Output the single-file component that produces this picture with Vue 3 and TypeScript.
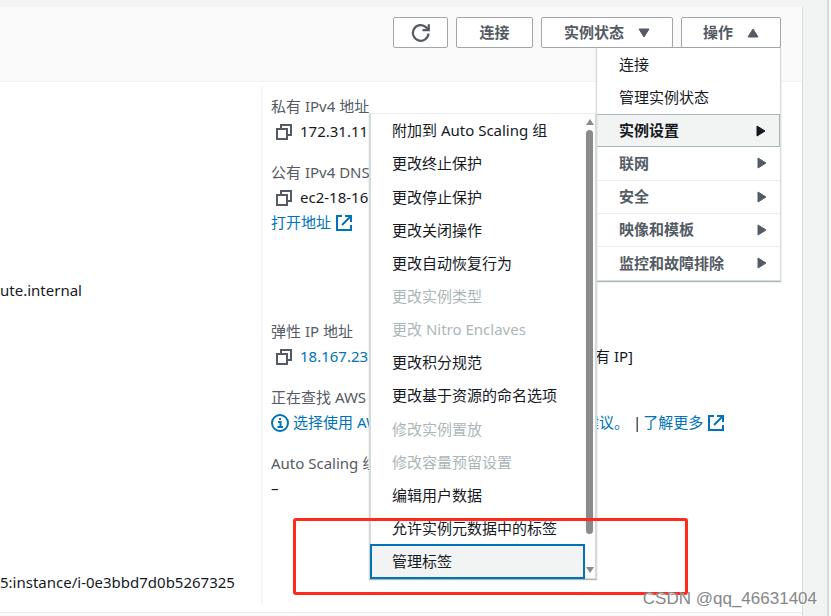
<script setup lang="ts">
interface MenuItem {
  label: string
  disabled?: boolean
  focused?: boolean
}

interface ActionItem {
  label: string
  group?: boolean
  open?: boolean
}

const actions: ActionItem[] = [
  { label: '连接' },
  { label: '管理实例状态' },
  { label: '实例设置', group: true, open: true },
  { label: '联网', group: true },
  { label: '安全', group: true },
  { label: '映像和模板', group: true },
  { label: '监控和故障排除', group: true },
]

const settings: MenuItem[] = [
  { label: '附加到 Auto Scaling 组' },
  { label: '更改终止保护' },
  { label: '更改停止保护' },
  { label: '更改关闭操作' },
  { label: '更改自动恢复行为' },
  { label: '更改实例类型', disabled: true },
  { label: '更改 Nitro Enclaves', disabled: true },
  { label: '更改积分规范' },
  { label: '更改基于资源的命名选项' },
  { label: '修改实例置放', disabled: true },
  { label: '修改容量预留设置', disabled: true },
  { label: '编辑用户数据' },
  { label: '允许实例元数据中的标签' },
  { label: '管理标签', focused: true },
]
</script>

<template>
  <div class="page">
    <main class="content">
      <section class="panel">
        <header class="toolbar">
          <button class="btn refresh" type="button" aria-label="刷新">
            <svg width="20" height="20" viewBox="0 0 20 20" fill="none" stroke="currentColor" stroke-width="2.2">
              <path d="M17.5 10.5A7.8 7.8 0 1 1 15.2 4.4L17.4 6.4" />
              <path d="M17.8 1.2V7.2H11.5" />
            </svg>
          </button>
          <button class="btn connect" type="button">连接</button>
          <button class="btn state" type="button">
            实例状态
            <svg width="12" height="10" viewBox="0 0 12 10"><path d="M1 1H11L6 9Z" fill="currentColor" stroke="currentColor" stroke-linejoin="round" /></svg>
          </button>
          <div class="dropdown">
            <button class="btn action" type="button" aria-expanded="true">
              操作
              <svg width="12" height="10" viewBox="0 0 12 10"><path d="M1 9H11L6 1Z" fill="currentColor" stroke="currentColor" stroke-linejoin="round" /></svg>
            </button>
            <div class="menu">
              <div v-for="item in actions" :key="item.label" class="entry">
                <button type="button" class="menu-item" :class="{ group: item.group, open: item.open }">
                  {{ item.label }}
                  <svg v-if="item.group" width="10" height="12" viewBox="0 0 10 12"><path d="M1 1V11L9 6Z" fill="currentColor" stroke="currentColor" stroke-linejoin="round" /></svg>
                </button>
                <div v-if="item.open" class="submenu">
                  <div class="options">
                    <button
                      v-for="option in settings"
                      :key="option.label"
                      type="button"
                      class="option"
                      :class="{ focused: option.focused }"
                      :disabled="option.disabled"
                    >{{ option.label }}</button>
                  </div>
                  <div class="scrollbar">
                    <svg width="8" height="6" viewBox="0 0 8 6"><path d="M0 6L4 0L8 6Z" fill="currentColor" /></svg>
                    <span class="thumb"></span>
                    <svg width="8" height="6" viewBox="0 0 8 6"><path d="M0 0H8L4 6Z" fill="currentColor" /></svg>
                  </div>
                </div>
              </div>
            </div>
          </div>
        </header>

        <div class="details">
          <div class="column first">
            <p class="line">ute.internal</p>
            <p class="line">5:instance/i-0e3bbd7d0b5267325</p>
          </div>
          <dl class="column second">
            <div class="field">
              <dt>私有 IPv4 地址</dt>
              <dd class="line copyable">
                <svg class="copy" width="16" height="16" viewBox="0 0 16 16"><path d="M1 5H11V15H1ZM5 5V1H15V11H11" /></svg>
                172.31.11
              </dd>
            </div>
            <div class="field tall">
              <dt>公有 IPv4 DNS</dt>
              <dd class="line copyable">
                <svg class="copy" width="16" height="16" viewBox="0 0 16 16"><path d="M1 5H11V15H1ZM5 5V1H15V11H11" /></svg>
                ec2-18-16
              </dd>
              <dd class="line">
                <a href="#" class="external">打开地址
                  <svg width="16" height="16" viewBox="0 0 16 16"><path d="M6 1H1V15H15V10M9 1H15V7M15 1L6 10" /></svg>
                </a>
              </dd>
            </div>
            <div class="field">
              <dt>弹性 IP 地址</dt>
              <dd class="line copyable">
                <svg class="copy" width="16" height="16" viewBox="0 0 16 16"><path d="M1 5H11V15H1ZM5 5V1H15V11H11" /></svg>
                <a href="#" class="address">18.167.23</a>
                <span>有 IP]</span>
              </dd>
            </div>
            <div class="field">
              <dt>正在查找 AWS</dt>
              <dd class="line">
                <a href="#" class="finder">
                  <svg width="18" height="18" viewBox="0 0 18 18"><circle cx="9" cy="9" r="8" /><path d="M9 4V6M7 8H9.5V13M6.5 13H12" /></svg>
                  选择使用 AW
                </a>
                <a href="#">建议。</a>
                <span class="bar">|</span>
                <a href="#" class="external">了解更多
                  <svg width="16" height="16" viewBox="0 0 16 16"><path d="M6 1H1V15H15V10M9 1H15V7M15 1L6 10" /></svg>
                </a>
              </dd>
            </div>
            <div class="field">
              <dt>Auto Scaling 组</dt>
              <dd class="line">–</dd>
            </div>
          </dl>
        </div>
        <div class="next"></div>
      </section>
    </main>
    <div class="highlight"></div>
    <div class="watermark">CSDN @qq_46631404</div>
  </div>
</template>

<style>
body {
  overflow: hidden;
  background: #fafafa;
}
</style>

<style scoped>
.page {
  position: relative;
  height: 100vh;
  overflow: hidden;
  box-sizing: border-box;
  padding-right: 2px;
  color: #16191f;
  font: 15px/25px "Noto Sans", "Noto Sans CJK SC", sans-serif;
}
.page * {
  box-sizing: border-box;
}
.content {
  height: 100%;
  padding: 7px 24px 0 0;
  background: #f2f3f3;
  border-right: 2px solid #d5dbdb;
}
.panel {
  display: flex;
  flex-direction: column;
  height: 100%;
  background: #fff;
  border-right: 1px solid #d5dbdb;
}
.toolbar {
  display: flex;
  justify-content: flex-end;
  gap: 8px;
  height: 75px;
  padding: 10px 21px 0 0;
  background: #fafafa;
  border-bottom: 1px solid #f2f3f3;
}
button {
  font: inherit;
  margin: 0;
}
.btn {
  display: flex;
  align-items: center;
  justify-content: center;
  gap: 14px;
  height: 31px;
  padding: 0;
  color: #545b64;
  font-weight: 700;
  background: #fff;
  border: 1px solid #a2a6ab;
  border-radius: 2px;
}
.refresh { width: 55px; }
.connect { width: 77px; }
.state { width: 132px; }
.action { width: 100px; }
.dropdown {
  position: relative;
}
.menu {
  position: absolute;
  top: 30px;
  right: 0;
  z-index: 2;
  display: grid;
  grid-auto-rows: 1fr;
  width: 185px;
  height: 234px;
  background: #fff;
  border: 1px solid #d5dbdb;
  border-top-color: #a2a6ab;
  box-shadow: 0 1px 1px #aab7b8;
}
.entry {
  position: relative;
}
.menu-item {
  display: flex;
  align-items: center;
  justify-content: space-between;
  width: 100%;
  height: 100%;
  padding: 0 13px 0 22px;
  color: #16191f;
  background: transparent;
  border: 0;
}
.menu-item.group {
  color: #545b64;
  font-weight: 700;
  border-bottom: 1px solid #eaeded;
}
.entry:last-child .menu-item {
  border-bottom: 0;
}
.menu-item.group.open {
  color: #16191f;
  background: #f2f3f3;
  border: 1px solid #aab7b8;
  border-left: 0;
}
.submenu {
  position: absolute;
  top: -1px;
  right: 100%;
  display: flex;
  width: 228px;
  height: 466px;
  background: #fff;
  border: 1px solid #d5dbdb;
  border-top-color: #eaeded;
  border-left-width: 2px;
  border-right-width: 2px;
  box-shadow: 0 1px 1px #aab7b8;
}
.options {
  display: grid;
  flex: 1;
  grid-auto-rows: 1fr;
}
.option {
  padding: 0 0 0 21px;
  color: #16191f;
  text-align: left;
  white-space: nowrap;
  background: transparent;
  border: 0;
}
.option:disabled {
  color: #aab7b8;
}
.option.focused {
  position: relative;
  background: #f2f3f3;
  outline: 2px solid #0073bb;
  outline-offset: -1px;
}
.scrollbar {
  display: flex;
  flex-direction: column;
  align-items: center;
  width: 11px;
  padding: 5px 0;
  color: #8b8b8b;
  background: #fcfcfc;
}
.thumb {
  width: 7px;
  height: 404px;
  margin: 5px 0 auto;
  background: #8b8b8b;
  border-radius: 4px;
}
.details {
  display: grid;
  flex: 1;
  grid-template-columns: 263px 1fr;
  padding: 4px 0 8px;
}
.column {
  margin: 0;
  min-width: 0;
}
.first {
  display: flex;
  flex-direction: column;
  justify-content: space-between;
  padding: 192px 0 9px;
  border-right: 2px solid #f5f6f6;
}
.second {
  display: flex;
  flex-direction: column;
  gap: 16px;
  padding: 8px 0 0 8px;
}
.tall {
  min-height: 143px;
}
p,
dd {
  margin: 0;
}
dt {
  color: #545b64;
  white-space: nowrap;
}
.line {
  display: flex;
  align-items: center;
  white-space: nowrap;
}
.copyable {
  gap: 8px;
  padding-left: 5px;
}
a {
  color: #0073bb;
  text-decoration: none;
}
.line svg {
  flex: none;
  fill: none;
  stroke: currentColor;
  stroke-width: 2;
}
.line .copy {
  color: #545b64;
}
.external {
  display: flex;
  align-items: center;
  gap: 5px;
}
.address {
  width: 287px;
}
.finder {
  display: flex;
  align-items: center;
  gap: 4px;
  width: 313px;
}
.bar {
  margin: 0 2px 0 4px;
}
.next {
  height: 4px;
  background: #fafafa;
  border-top: 1px solid #eaeded;
}
.highlight {
  position: absolute;
  top: 518px;
  left: 293px;
  z-index: 3;
  width: 395px;
  height: 77px;
  border: 3px solid #ff2a1c;
  border-radius: 3px;
  pointer-events: none;
}
.watermark {
  position: absolute;
  right: 14px;
  bottom: 5px;
  z-index: 4;
  color: #858789;
  font: 17px/25px "Liberation Sans", sans-serif;
  text-shadow: 1px 1px 0 #fff;
}
</style>
